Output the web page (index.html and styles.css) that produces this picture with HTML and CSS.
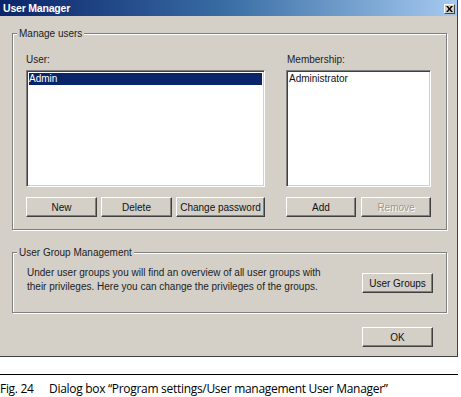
FILE: index.html
```html
<!DOCTYPE html>
<html>
<head>
<meta charset="utf-8">
<link rel="stylesheet" href="styles.css">
</head>
<body>
<div class="window">
  <div class="titlebar">
    <span class="title">User Manager</span>
    <span class="close"><svg width="7" height="6" viewBox="0 0 7 6"><path d="M0 0h2l1.5 2 1.5-2h2l-2.5 3 2.5 3h-2l-1.5-2-1.5 2h-2l2.5-3z" fill="#000"/></svg></span>
  </div>
  <div class="body">
    <div class="group group-users">
      <div class="legend">Manage users</div>
      <div class="columns">
        <div class="col col-left">
          <div class="label">User:</div>
          <div class="listbox">
            <div class="item selected">Admin</div>
          </div>
          <div class="buttons">
            <div class="btn w71">New</div>
            <div class="btn w71">Delete</div>
            <div class="btn w89">Change password</div>
          </div>
        </div>
        <div class="col col-right">
          <div class="label">Membership:</div>
          <div class="listbox">
            <div class="item">Administrator</div>
          </div>
          <div class="buttons gap5">
            <div class="btn w70">Add</div>
            <div class="btn w70 disabled">Remove</div>
          </div>
        </div>
      </div>
    </div>
    <div class="group group-mgmt">
      <div class="legend">User Group Management</div>
      <div class="mgmt-row">
        <div class="desc">Under user groups you will find an overview of all user groups with<br>their privileges. Here you can change the privileges of the groups.</div>
        <div class="btn w71 groups-btn">User Groups</div>
      </div>
    </div>
    <div class="footer">
      <div class="btn w71">OK</div>
    </div>
  </div>
</div>
<div class="rule"></div>
<div class="caption"><span class="fig">Fig. 24</span><span>Dialog box “Program settings/User management User Manager”</span></div>
</body>
</html>
```
FILE: styles.css
```css
* { box-sizing: border-box; }
html, body { margin: 0; padding: 0; background: #fff; }
body { width: 461px; height: 397px; }

.window {
  width: 458px;
  height: 357px;
  background: #d4d0c8;
  border-right: 1px solid #404040;
  border-bottom: 1px solid #404040;
  font-family: "Liberation Sans", Arial, sans-serif;
  font-size: 10px;
  color: #000;
}

.titlebar {
  height: 16px;
  background: linear-gradient(to right, #0a246a 0%, #3a6ea5 50%, #a6caf0 100%);
  display: flex;
  align-items: center;
  justify-content: space-between;
  padding: 0 2px 0 3px;
}
.title {
  color: #fff;
  font-weight: bold;
  font-size: 10.5px;
  line-height: 16px;
  letter-spacing: -0.2px;
}
.close {
  width: 11px;
  height: 10px;
  margin-top: 2px;
  background: #d4d0c8;
  border-top: 1px solid #fff;
  border-left: 1px solid #fff;
  border-right: 1px solid #404040;
  border-bottom: 1px solid #404040;
  display: flex;
  align-items: center;
  justify-content: center;
}

.body {
  padding: 17px 10px 0 12px;
}

.group {
  width: 435px;
  border: 1px solid #808080;
  box-shadow: inset 1px 1px 0 #fff, 1px 1px 0 #fff;
}
.group-users { height: 197px; }
.group-mgmt { height: 61px; margin-top: 22px; }

.legend {
  display: table;
  margin: -7px 0 0 4px;
  padding: 0 2px;
  background: #d4d0c8;
  line-height: 13px;
  color: #222;
}

.columns {
  display: flex;
  gap: 21px;
  padding: 0 13px;
  margin-top: 13px;
}
.col-left { width: 239px; }
.col-right { width: 145px; }

.label {
  line-height: 13px;
  height: 17px;
  color: #222;
}
.col-right .label { padding-left: 1px; }

.listbox {
  height: 117px;
  background: #fff;
  border-top: 1px solid #808080;
  border-left: 1px solid #808080;
  border-right: 1px solid #fff;
  border-bottom: 1px solid #fff;
  box-shadow: inset 1px 1px 0 #404040, inset -1px -1px 0 #d4d0c8;
  padding: 2px 2px;
}
.item {
  line-height: 12px;
  height: 12px;
  color: #111;
}
.item.selected {
  background: #0a246a;
  color: #fff;
}

.buttons {
  display: flex;
  gap: 4px;
  margin-top: 10px;
}
.buttons.gap5 { gap: 5px; }

.btn {
  height: 20px;
  background: #d4d0c8;
  border-top: 1px solid #fff;
  border-left: 1px solid #fff;
  border-right: 1px solid #404040;
  border-bottom: 1px solid #404040;
  box-shadow: inset -1px -1px 0 #808080;
  display: flex;
  align-items: center;
  justify-content: center;
  color: #111;
  white-space: nowrap;
}
.w70 { width: 70px; }
.w71 { width: 71px; }
.w89 { width: 89px; }
.btn.disabled {
  color: #9a9890;
  text-shadow: 1px 1px 0 #fff;
}

.mgmt-row {
  display: flex;
  justify-content: space-between;
  padding: 0 13px 0 14px;
  margin-top: 7px;
}
.desc {
  line-height: 14px;
  color: #222;
}
.groups-btn { margin-top: 7px; }

.footer {
  display: flex;
  justify-content: flex-end;
  padding-right: 14px;
  margin-top: 14px;
}

.rule {
  width: 458px;
  height: 1px;
  background: #000;
  margin-top: 17px;
}
.caption {
  display: flex;
  margin-top: 6px;
  font-family: "Open Sans", "Noto Sans", sans-serif;
  font-size: 12px;
  letter-spacing: -0.3px;
  line-height: 15px;
  color: #000;
}
.fig { width: 49px; }
```
